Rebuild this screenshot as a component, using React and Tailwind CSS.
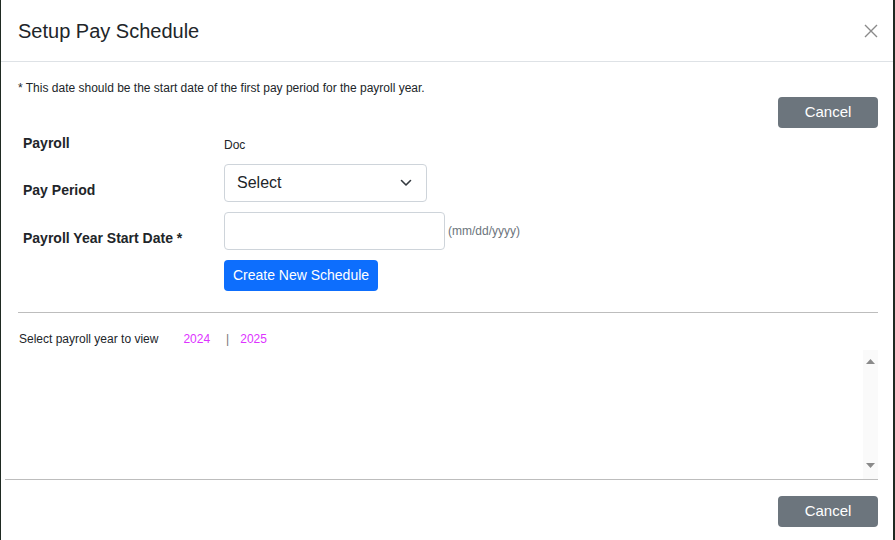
import { useState } from 'react'

function App() {
  const [period, setPeriod] = useState('')
  const [startDate, setStartDate] = useState('')

  return (
    <div className="h-[540px] w-[895px] bg-[#1f2a22] pl-px pr-[2px] font-['Liberation_Sans',Arial,sans-serif]">
      <div className="flex h-full flex-col bg-white">
        {/* Header */}
        <div className="flex h-[62px] items-center justify-between border-b border-[#dee2e6] pl-[17px] pr-[15px]">
          <h1 className="text-[20px] text-[#212529]">Setup Pay Schedule</h1>
          <button className="text-[#8a8a8a]">
            <svg width="14" height="14" viewBox="0 0 14 14" fill="none" stroke="currentColor" strokeWidth="1.4">
              <path d="M1 1L13 13M13 1L1 13" />
            </svg>
          </button>
        </div>

        {/* Body */}
        <div className="flex flex-col pl-[17px] pr-[15px]">
          <p className="mt-[19px] text-[12px] leading-[14px] text-[#212529]">
            * This date should be the start date of the first pay period for the payroll year.
          </p>
          <div className="mt-[2px] flex justify-end">
            <button className="h-[31px] w-[100px] rounded-[4px] bg-[#6c757d] text-[15px] text-white">Cancel</button>
          </div>

          <div className="mt-[7px] flex pl-[5px]">
            <div className="w-[201px] text-[14px] font-bold text-[#212529]">
              <div className="h-[16px] leading-[16px]">Payroll</div>
              <div className="mt-[31px] h-[16px] leading-[16px]">Pay Period</div>
              <div className="mt-[32px] h-[16px] leading-[16px]">Payroll Year Start Date *</div>
            </div>
            <div className="flex flex-col">
              <div className="mt-[3px] h-[14px] text-[12px] leading-[14px] text-[#212529]">Doc</div>
              <div className="relative mt-[12px] w-[203px]">
                <select
                  value={period}
                  onChange={(e) => setPeriod(e.target.value)}
                  className="h-[38px] w-full appearance-none rounded-[4px] border border-[#ced4da] bg-white pl-[12px] text-[16px] text-[#212529] outline-none"
                >
                  <option value="">Select</option>
                  <option value="weekly">Weekly</option>
                  <option value="biweekly">Bi-Weekly</option>
                  <option value="monthly">Monthly</option>
                </select>
                <svg className="pointer-events-none absolute right-[15px] top-[15px]" width="12" height="8" viewBox="0 0 12 8" fill="none" stroke="#343a40" strokeWidth="1.6" strokeLinecap="round" strokeLinejoin="round">
                  <path d="M1.5 1.5L6 6L10.5 1.5" />
                </svg>
              </div>
              <div className="mt-[10px] flex items-center">
                <input
                  value={startDate}
                  onChange={(e) => setStartDate(e.target.value)}
                  className="h-[38px] w-[221px] rounded-[4px] border border-[#ced4da] px-[12px] text-[16px] outline-none"
                />
                <span className="ml-[3px] text-[12px] text-[#6c757d]">(mm/dd/yyyy)</span>
              </div>
              <button className="mt-[10px] h-[31px] w-[154px] rounded-[4px] bg-[#0d6efd] text-[14px] text-white">
                Create New Schedule
              </button>
            </div>
          </div>

          <div className="mt-[21px] border-t border-[#bdbdbd]" />

          <div className="mt-[19px] flex items-center text-[12px] leading-[14px]">
            <span className="ml-[1px] text-[#212529]">Select payroll year to view</span>
            <span className="ml-[25px] text-[#dd33ff]">2024</span>
            <span className="ml-[16px] text-[#777]">|</span>
            <span className="ml-[11px] text-[#dd33ff]">2025</span>
          </div>
        </div>

        {/* Scroll area */}
        <div className="mt-[4px] flex h-[129px] pr-[15px]">
          <div className="flex-1" />
          <div className="flex w-[15px] flex-col items-center justify-between bg-[#fafafa] pb-[11px] pt-[9px]">
            <svg width="9" height="5" viewBox="0 0 9 5"><path d="M0 5L4.5 0L9 5Z" fill="#8a8a8a" /></svg>
            <svg width="9" height="5" viewBox="0 0 9 5"><path d="M0 0L4.5 5L9 0Z" fill="#8a8a8a" /></svg>
          </div>
        </div>

        <div className="ml-[4px] mr-[15px] border-t border-[#bdbdbd]" />

        <div className="mt-[16px] flex justify-end pr-[15px]">
          <button className="h-[31px] w-[100px] rounded-[4px] bg-[#6c757d] text-[15px] text-white">Cancel</button>
        </div>
      </div>
    </div>
  )
}

export default App
